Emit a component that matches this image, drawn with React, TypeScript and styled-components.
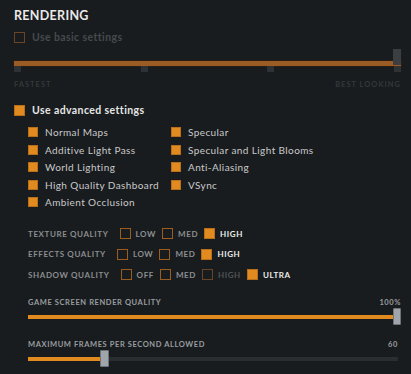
import React from 'react'
import styled, { createGlobalStyle } from 'styled-components';

const GlobalStyle = createGlobalStyle`
  html, body {
    margin: 0;
    padding: 0;
    background: #191c1e;
  }
  body {
    font-family: Lato, "Open Sans", "Liberation Sans", sans-serif;
  }
`;

const Panel = styled.div`
  width: 411px;
  height: 374px;
  box-sizing: border-box;
  padding: 8px 10px 0 14px;
  background: #191c1e;
  overflow: hidden;
`;

const Title = styled.h1`
  margin: 0;
  font-size: 12.5px;
  line-height: 16px;
  font-weight: 700;
  letter-spacing: 0.3px;
  color: #e9e9e9;
`;

const CheckRow = styled.div<{ $mt: number }>`
  display: flex;
  align-items: center;
  gap: 7px;
  height: 12px;
  margin-top: ${p => p.$mt}px;
`;

const Box = styled.span<{ $on?: boolean; $dim?: boolean; $size?: number }>`
  box-sizing: border-box;
  flex: none;
  width: ${p => p.$size ?? 11}px;
  height: ${p => p.$size ?? 11}px;
  background: ${p => (p.$on ? '#e08a1f' : 'transparent')};
  border: 1px solid ${p => (p.$on ? '#b96f19' : p.$dim ? '#6a4424' : '#9a5d1d')};
`;

const MainLabel = styled.span<{ $dim?: boolean }>`
  font-size: 10.5px;
  font-weight: 700;
  letter-spacing: 0.4px;
  color: ${p => (p.$dim ? '#464a4d' : '#e6e6e6')};
`;

const PresetSlider = styled.div`
  position: relative;
  margin-top: 6px;
  height: 23px;
  display: flex;
  flex-direction: column;
  padding-top: 12px;
  box-sizing: border-box;
`;

const PresetTrack = styled.div`
  height: 5px;
  background: #9a5c24;
  box-shadow: 0 0 0 1px #2a1d12;
`;

const Ticks = styled.div`
  display: flex;
  justify-content: space-between;
`;

const Tick = styled.span`
  width: 7px;
  height: 6px;
  background: #2e3235;
`;

const PresetHandle = styled.span`
  position: absolute;
  right: 0;
  top: 0;
  width: 8px;
  height: 16px;
  background: #3b3f42;
`;

const EndLabels = styled.div`
  display: flex;
  justify-content: space-between;
  margin-top: 8px;
  font-size: 7.5px;
  line-height: 10px;
  font-weight: 700;
  letter-spacing: 1px;
  color: #34383b;
`;

const OptionsGrid = styled.div`
  display: grid;
  grid-template-columns: 143px auto;
  grid-auto-rows: 10px;
  row-gap: 7.5px;
  margin-top: 11px;
  padding-left: 14px;
`;

const Option = styled.div`
  display: flex;
  align-items: center;
  gap: 7px;
  font-size: 10px;
  letter-spacing: 0.4px;
  color: #c9cacb;
`;

const QualityList = styled.div`
  display: flex;
  flex-direction: column;
  gap: 9.5px;
  margin-top: 21px;
  padding-left: 14px;
`;

const QualityRow = styled.div`
  display: flex;
  align-items: center;
  height: 11px;
`;

const QualityName = styled.span`
  font-size: 8px;
  font-weight: 700;
  letter-spacing: 0.6px;
  color: #8a8d90;
  margin-right: 11px;
`;

const Choice = styled.span`
  display: flex;
  align-items: center;
  gap: 5px;
  margin-right: 6px;
`;

const ChoiceText = styled.span<{ $state: 'on' | 'off' | 'dim' }>`
  font-size: 8px;
  font-weight: 700;
  letter-spacing: 0.6px;
  color: ${p => (p.$state === 'on' ? '#ececec' : p.$state === 'dim' ? '#505356' : '#8c8f92')};
`;

const SliderBlock = styled.div<{ $mt: number; $pr: number }>`
  margin-top: ${p => p.$mt}px;
  padding: 0 ${p => p.$pr}px 0 14px;
`;

const SliderHead = styled.div`
  display: flex;
  justify-content: space-between;
  font-size: 7.5px;
  line-height: 10px;
  font-weight: 700;
  letter-spacing: 0.6px;
  color: #9a9da0;
`;

const Slider = styled.div`
  position: relative;
  height: 17px;
  display: flex;
  align-items: center;
`;

const Track = styled.div`
  position: relative;
  width: 100%;
  height: 4px;
  background: #2a2e31;
`;

const Fill = styled.div`
  height: 100%;
  background: #e08a1f;
`;

const Handle = styled.span`
  position: absolute;
  top: 0;
  width: 8px;
  height: 17px;
  box-sizing: border-box;
  background: #9fa5aa;
  border: 1px solid #6d7377;
  border-radius: 1px;
`;

const leftOptions = ['Normal Maps', 'Additive Light Pass', 'World Lighting', 'High Quality Dashboard', 'Ambient Occlusion'];
const rightOptions = ['Specular', 'Specular and Light Blooms', 'Anti-Aliasing', 'VSync'];

type ChoiceItem = { label: string; state: 'on' | 'off' | 'dim' };

const qualities: { name: string; choices: ChoiceItem[] }[] = [
    { name: 'TEXTURE QUALITY', choices: [{ label: 'LOW', state: 'off' }, { label: 'MED', state: 'off' }, { label: 'HIGH', state: 'on' }] },
    { name: 'EFFECTS QUALITY', choices: [{ label: 'LOW', state: 'off' }, { label: 'MED', state: 'off' }, { label: 'HIGH', state: 'on' }] },
    { name: 'SHADOW QUALITY', choices: [{ label: 'OFF', state: 'off' }, { label: 'MED', state: 'off' }, { label: 'HIGH', state: 'dim' }, { label: 'ULTRA', state: 'on' }] },
];

const App = () => {
    const renderPct = 100;
    const fpsPct = 19.5;

    const cells: React.ReactNode[] = [];
    for (let i = 0; i < leftOptions.length; i++) {
        cells.push(
            <Option key={'l' + i}><Box $on $size={10} />{leftOptions[i]}</Option>
        );
        cells.push(
            rightOptions[i]
                ? <Option key={'r' + i}><Box $on $size={10} />{rightOptions[i]}</Option>
                : <span key={'r' + i} />
        );
    }

    return (
        <>
            <GlobalStyle />
            <Panel>
                <Title>RENDERING</Title>

                <CheckRow $mt={7}>
                    <Box $dim />
                    <MainLabel $dim>Use basic settings</MainLabel>
                </CheckRow>

                <PresetSlider>
                    <PresetTrack />
                    <Ticks>
                        <Tick /><Tick /><Tick /><Tick />
                    </Ticks>
                    <PresetHandle />
                </PresetSlider>

                <EndLabels>
                    <span>FASTEST</span>
                    <span>BEST LOOKING</span>
                </EndLabels>

                <CheckRow $mt={14}>
                    <Box $on />
                    <MainLabel>Use advanced settings</MainLabel>
                </CheckRow>

                <OptionsGrid>{cells}</OptionsGrid>

                <QualityList>
                    {qualities.map(q => (
                        <QualityRow key={q.name}>
                            <QualityName>{q.name}</QualityName>
                            {q.choices.map(c => (
                                <Choice key={c.label}>
                                    <Box $on={c.state === 'on'} $dim={c.state === 'dim'} />
                                    <ChoiceText $state={c.state}>{c.label}</ChoiceText>
                                </Choice>
                            ))}
                        </QualityRow>
                    ))}
                </QualityList>

                <SliderBlock $mt={18} $pr={0}>
                    <SliderHead>
                        <span>GAME SCREEN RENDER QUALITY</span>
                        <span>100%</span>
                    </SliderHead>
                    <Slider>
                        <Track>
                            <Fill style={{ width: `${renderPct}%` }} />
                        </Track>
                        <Handle style={{ left: `calc(${renderPct}% - 8px)` }} />
                    </Slider>
                </SliderBlock>

                <SliderBlock $mt={15} $pr={3}>
                    <SliderHead>
                        <span>MAXIMUM FRAMES PER SECOND ALLOWED</span>
                        <span>60</span>
                    </SliderHead>
                    <Slider>
                        <Track>
                            <Fill style={{ width: `${fpsPct}%` }} />
                        </Track>
                        <Handle style={{ left: `${fpsPct}%`, width: 9 }} />
                    </Slider>
                </SliderBlock>
            </Panel>
        </>
    )
}

export default App
